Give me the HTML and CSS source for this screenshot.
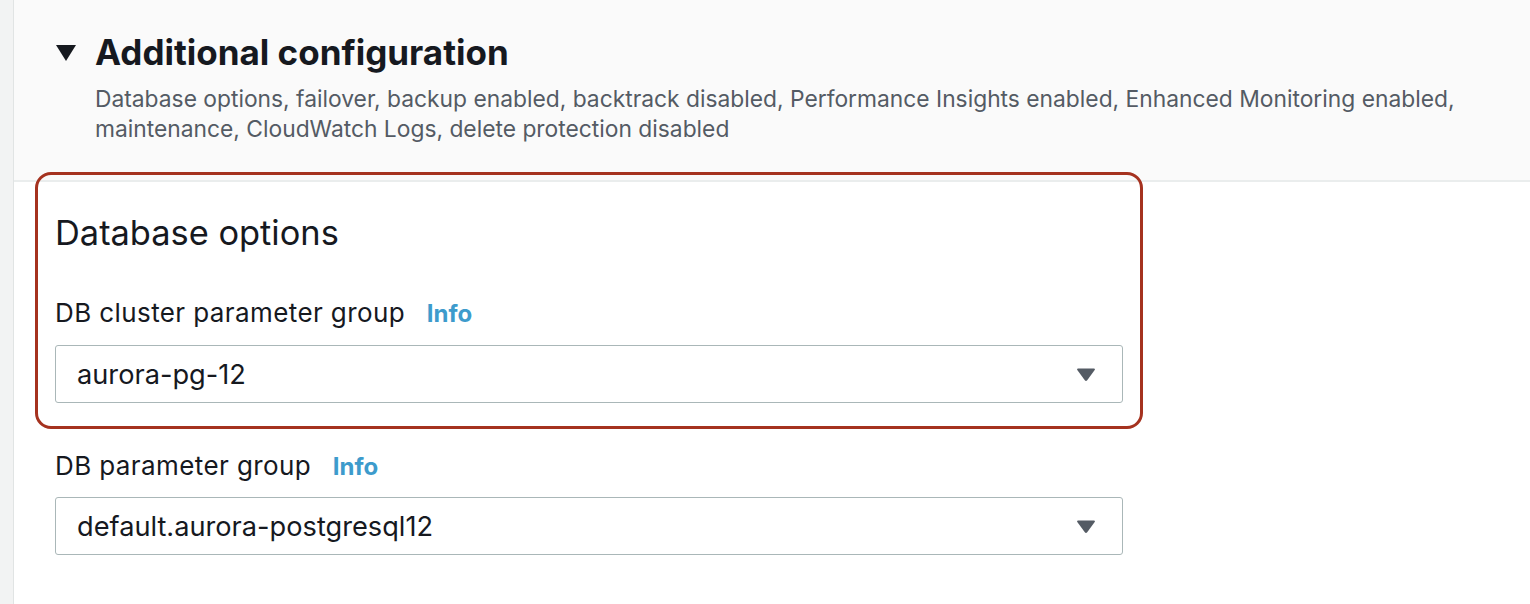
FILE: index.html
```html
<!DOCTYPE html>
<html lang="en">
<head>
<meta charset="utf-8">
<title>Additional configuration</title>
<link rel="stylesheet" href="styles.css">
</head>
<body>
<div class="shell">
  <div class="gutter"></div>
  <div class="main">
    <div class="header">
      <div class="title-row">
        <svg class="caret" width="20" height="16" viewBox="0 0 20 16"><polygon points="0,0 20,0 10,16" fill="#16191f"/></svg>
        <h2 class="title">Additional configuration</h2>
      </div>
      <p class="desc">Database options, failover, backup enabled, backtrack disabled, Performance Insights enabled, Enhanced Monitoring enabled, maintenance, CloudWatch Logs, delete protection disabled</p>
    </div>
    <div class="content">
      <div class="highlight">
        <h3 class="section-title">Database options</h3>
        <div class="field">
          <div class="label">DB cluster parameter group <a class="info">Info</a></div>
          <div class="select">
            <span class="value">aurora-pg-12</span>
            <svg class="arrow" width="20" height="15" viewBox="0 0 20 15"><path d="M2 1.5 H18 Q19.6 1.5 18.7 3 L11.2 13.3 Q10 14.8 8.8 13.3 L1.3 3 Q0.4 1.5 2 1.5 Z" fill="#545b64"/></svg>
          </div>
        </div>
      </div>
      <div class="field plain">
        <div class="label">DB parameter group <a class="info">Info</a></div>
        <div class="select">
          <span class="value">default.aurora-postgresql12</span>
          <svg class="arrow" width="20" height="15" viewBox="0 0 20 15"><path d="M2 1.5 H18 Q19.6 1.5 18.7 3 L11.2 13.3 Q10 14.8 8.8 13.3 L1.3 3 Q0.4 1.5 2 1.5 Z" fill="#545b64"/></svg>
        </div>
      </div>
    </div>
  </div>
</div>
</body>
</html>
```
FILE: styles.css
```css
html, body {
  margin: 0;
  padding: 0;
  background: #ffffff;
}
body {
  font-family: Inter, "Liberation Sans", Arial, sans-serif;
  color: #16191f;
  height: 604px;
  overflow: hidden;
}
.shell {
  display: flex;
  min-height: 604px;
}
.gutter {
  width: 13px;
  flex: none;
  background: #f2f3f3;
  border-right: 1px solid #e1e4e4;
}
.main {
  flex: 1;
  min-width: 0;
}
.header {
  background: #fafafa;
  border-bottom: 2px solid #eaeded;
  padding: 30px 40px 36px 42px;
}
.title-row {
  display: flex;
  align-items: center;
  gap: 19px;
  height: 44px;
}
.caret {
  flex: none;
  margin-top: 2px;
}
.title {
  margin: 0;
  font-size: 35px;
  line-height: 44px;
  font-weight: 700;
  color: #16191f;
}
.desc {
  margin: 10px 0 0 39px;
  font-size: 22.8px;
  line-height: 30px;
  color: #545b64;
}
.content {
  padding: 0 0 0 21px;
}
.highlight {
  position: relative;
  box-sizing: border-box;
  margin-top: -10px;
  width: 1108px;
  border: 3px solid #a5321f;
  border-radius: 16px;
  padding: 38px 17px 23px 17px;
}
.section-title {
  margin: 0 0 44px 0;
  font-size: 34.4px;
  line-height: 40px;
  font-weight: 400;
  color: #16191f;
}
.label {
  font-size: 26px;
  letter-spacing: 0.4px;
  line-height: 32px;
  height: 32px;
  color: #16191f;
  margin-bottom: 16px;
}
.info {
  color: #3d9bcc;
  font-size: 24px;
  letter-spacing: 0;
  font-weight: 700;
  margin-left: 14px;
  text-decoration: none;
}
.select {
  box-sizing: border-box;
  height: 58px;
  border: 1.5px solid #aab7b8;
  border-radius: 3px;
  display: flex;
  align-items: center;
  justify-content: space-between;
  padding: 0 26px 0 21px;
  width: 1068px;
}
.value {
  font-size: 27.2px;
  color: #16191f;
}
.arrow {
  flex: none;
}
.field.plain {
  margin-top: 21px;
  padding-left: 20px;
}
.field.plain .label {
  margin-bottom: 15px;
}
```
